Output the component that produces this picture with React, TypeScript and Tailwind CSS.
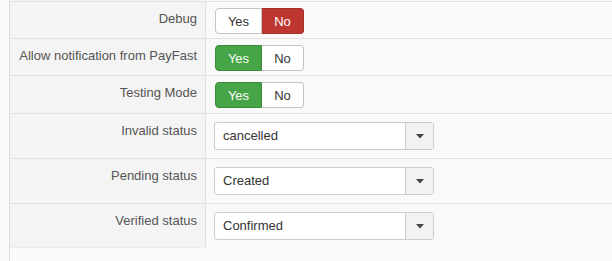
import React from "react";

const font = { fontFamily: '"Liberation Sans", Arial, sans-serif' };

function Toggle({ value }: { value: "yes" | "no" }) {
  const yesActive = value === "yes";
  return (
    <div className="ml-[1px] flex h-[26px] text-[13px] leading-none">
      <div
        className={
          "flex w-[47px] items-center justify-center rounded-l-[4px] border " +
          (yesActive
            ? "border-[#3a8a3a] bg-[#46a546] text-white"
            : "border-[#c4c4c4] bg-white text-[#333]")
        }
      >
        Yes
      </div>
      <div
        className={
          "flex w-[42px] items-center justify-center rounded-r-[4px] border border-l-0 " +
          (!yesActive
            ? "border-[#a52f29] bg-[#bd362f] text-white"
            : "border-[#c4c4c4] bg-white text-[#333]")
        }
      >
        No
      </div>
    </div>
  );
}

function Select({ value }: { value: string }) {
  return (
    <div className="flex h-[28px] w-[220px] overflow-hidden rounded-[3px] border border-[#ccc] bg-white text-[13px] text-[#333]">
      <div className="flex flex-1 items-center pl-[8px]">{value}</div>
      <div className="flex w-[28px] items-center justify-center border-l border-[#ccc] bg-[#f2f2f2]">
        <svg width="8" height="5" viewBox="0 0 8 5">
          <path d="M0 0 L8 0 L4 4.5 Z" fill="#444" />
        </svg>
      </div>
    </div>
  );
}

type Row = { label: string; h: number; kind: "toggle" | "select"; value: string };

const rows: Row[] = [
  { label: "Debug", h: 36, kind: "toggle", value: "no" },
  { label: "Allow notification from PayFast", h: 36, kind: "toggle", value: "yes" },
  { label: "Testing Mode", h: 37, kind: "toggle", value: "yes" },
  { label: "Invalid status", h: 44, kind: "select", value: "cancelled" },
  { label: "Pending status", h: 44, kind: "select", value: "Created" },
  { label: "Verified status", h: 43, kind: "select", value: "Confirmed" },
];

export default function App() {
  return (
    <div className="h-[261px] w-[612px] overflow-hidden bg-[#fafafa]" style={font}>
      <div className="ml-[9px] h-full border-l border-[#dcdcdc]">
        <div className="flex h-[1px]">
          <div className="w-[195px] bg-[#f4f4f4]" />
          <div className="flex-1" />
        </div>
        {rows.map((r) => (
          <div key={r.label} className="flex border-t border-[#e1e1e1]">
            <div
              className="w-[196px] border-r border-[#e1e1e1] bg-[#f4f4f4] pr-[8px] pt-[8px] text-right text-[13px] leading-[18px] text-[#555]"
              style={{ height: r.h }}
            >
              {r.label}
            </div>
            <div
              className={
                "flex-1 bg-[#f9f9f9] pl-[8px] " +
                (r.kind === "toggle" ? "pt-[6px]" : "pt-[8px]")
              }
            >
              {r.kind === "toggle" ? (
                <Toggle value={r.value as "yes" | "no"} />
              ) : (
                <Select value={r.value} />
              )}
            </div>
          </div>
        ))}
        <div className="flex h-[1px]">
          <div className="w-[196px] bg-[#ececec]" />
          <div className="flex-1 bg-[#f9f9f9]" />
        </div>
      </div>
    </div>
  );
}
